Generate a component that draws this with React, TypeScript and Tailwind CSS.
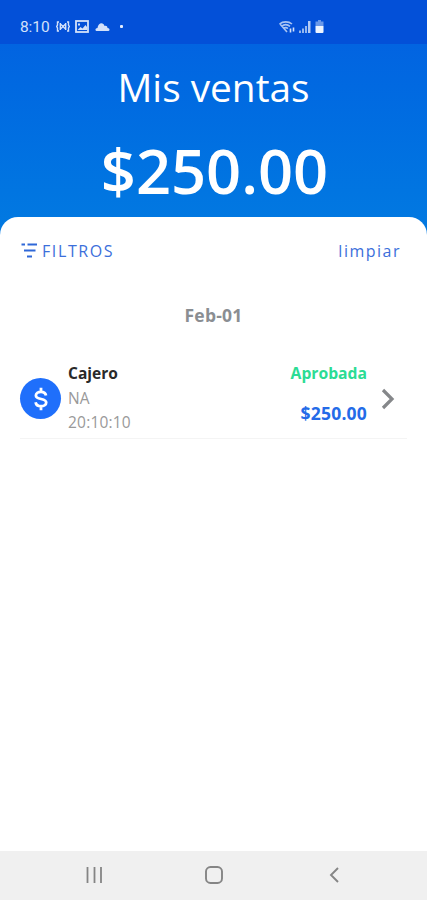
import React from "react";

function StatusBar() {
  return (
    <div className="flex h-11 items-center bg-[#0350d8] pl-5 pt-[9px] text-[#d3e1fa]">
      <span className="w-[36px] font-[Roboto,sans-serif] text-[15.5px] leading-5 tracking-[-0.1px]">8:10</span>
      <svg className="h-[11px] w-[14px]" viewBox="0 0 14 11" fill="none" stroke="currentColor" strokeWidth="1.4">
        <path d="M3 1H1.500v3L.7 5.500l.8 1.500v3H3M11 1h1.500v3l.8 1.500-.8 1.500v3H11M4.300 2v7M9.700 2v7M4.500 3l5 5M9.500 3l-5 5" />
      </svg>
      <svg className="ml-[5px] h-[13px] w-[14px]" viewBox="0 0 14 13" fill="none" stroke="currentColor">
        <rect x="1" y="1" width="12" height="11" strokeWidth="1.800" />
        <path d="M2.500 10l3-3 2 1.500 3-3.500 1.500 2v3z" fill="currentColor" stroke="none" />
        <path d="M3 3.500h2v2H3z" fill="currentColor" stroke="none" />
      </svg>
      <svg className="ml-1.5 h-2.5 w-[15px]" viewBox="0 0 15 10" fill="currentColor">
        <path d="M2 9C-.5 9 .2 6 2.500 6 3 .5 8.500-.2 9.500 4c2-.5 2.800.5 3 2C15 6 15 9 13.500 9z" />
      </svg>
      <span className="ml-[10px] size-[3px] rounded-[1px] bg-[#e4eeff]" />
      <svg className="ml-[156px] h-3 w-4" viewBox="0 0 16 12" fill="none" stroke="currentColor" strokeWidth="1.600">
        <path d="M.5 3C4 .1 9.500.1 13 3M2.500 5.300c2.500-2 6-2 8.500 0M4.500 7.500c1.500-1.200 3-1.200 4.500 0M1 3l7 8" opacity=".8" />
        <path d="M11.500 7.500v4M14.500 6.500v4" />
      </svg>
      <svg className="ml-1 h-3 w-3" viewBox="0 0 12 12" fill="currentColor">
        <path d="M0 9.500h2V12H0zM3 7.500h2V12H3zM6 5h2v7H6z" opacity=".7" />
        <path d="M9 0h2.500v12H9z" opacity=".85" />
      </svg>
      <svg className="ml-1 h-[13px] w-[9px]" viewBox="0 0 9 13" fill="currentColor">
        <path d="M3 0h3v1.500h2.500V6H.5V1.500H3z" opacity=".5" />
        <path d="M.5 6h8v6a1 1 0 0 1-1 1h-6a1 1 0 0 1-1-1z" fill="#eff5ff" />
      </svg>
    </div>
  );
}

function FilterIcon() {
  return (
    <svg className="h-4 w-4" viewBox="0 0 16 16" fill="none" stroke="#2f68d8" strokeWidth="1.900">
      <path d="M.5 1.500H4M6.500 1.500H16M3 7.500h11.500M6 13.500h5" />
    </svg>
  );
}

function SaleRow() {
  return (
    <div className="ml-5 mr-5 flex h-[78px] border-b border-[#f4f4f4]">
      <div className="mt-[17px] flex size-[41px] items-center justify-center rounded-full bg-[#1f6ffb]">
        <svg className="h-6 w-4" viewBox="0 0 16 24" fill="none" stroke="white" strokeWidth="2.800">
          <path d="M8 .8v4M8 19.200v4M13 8.500C12.600 6 11 4.800 8 4.800 5 4.800 2.900 6.200 2.900 8.400c0 4.800 10.300 2.400 10.300 7 0 2.300-2.200 3.800-5.200 3.800-3.300 0-5-1.500-5.400-4" />
        </svg>
      </div>
      <div className="ml-[7px] flex flex-col text-[15.5px] leading-6 text-[#999]">
        <span className="font-bold text-[#292929]">Cajero</span>
        <span className="mt-px">NA</span>
        <span className="tracking-[0.2px]">20:10:10</span>
      </div>
      <div className="ml-auto flex flex-col items-end">
        <span className="text-[15.700px] font-bold leading-6 text-[#2bdc94]">Aprobada</span>
        <span className="mt-4 text-[17.500px] font-bold leading-6 tracking-[0.2px] text-[#246be8]">$250.00</span>
      </div>
      <svg className="ml-[14px] mr-3 mt-[27px] h-[22px] w-[14px]" viewBox="0 0 14 22" fill="none" stroke="#85878a" strokeWidth="3.200">
        <path d="M2 2l9 9-9 9" />
      </svg>
    </div>
  );
}

export default function App() {
  return (
    <div className="flex h-[900px] w-[427px] flex-col overflow-hidden bg-white font-['Open_Sans',sans-serif]">
      <StatusBar />
      <header className="flex h-[203px] shrink-0 flex-col items-center bg-linear-to-b from-[#0264e1] to-[#0279e1] to-90% pt-[13px] text-white">
        <h1 className="text-[38.800px] leading-[60px]">Mis ventas</h1>
        <p className="mt-[13px] pl-[2px] text-[61.400px] font-semibold leading-[80px]">$250.00</p>
      </header>
      <main className="-mt-[30px] flex flex-1 flex-col rounded-t-[18px] bg-white">
        <div className="mt-[22px] flex h-6 items-center justify-between pl-[21px] pr-[26px] text-[16px] leading-6 text-[#3c6fdb]">
          <div className="flex items-center gap-[5px]">
            <FilterIcon />
            <span className="tracking-[1.600px]">FILTROS</span>
          </div>
          <span className="tracking-[1.500px]">limpiar</span>
        </div>
        <h2 className="mb-[34px] mt-10 text-center text-[17.500px] font-bold leading-6 tracking-[0.200px] text-[#8a8e92]">Feb-01</h2>
        <SaleRow />
      </main>
      <nav className="flex h-[49px] shrink-0 items-center bg-[#f0f0f0] pb-[2px] text-[#858585]">
        <svg className="ml-[86px] h-4 w-4" viewBox="0 0 16 16" fill="none" stroke="currentColor" strokeWidth="1.800">
          <path d="M1.500 0v16M8.500 0v16M15 0v16" />
        </svg>
        <svg className="ml-[103px] h-[18px] w-[18px]" viewBox="0 0 18 18" fill="none" stroke="currentColor" strokeWidth="1.900">
          <rect x="1" y="1" width="16" height="16" rx="4.500" />
        </svg>
        <svg className="ml-[106px] h-4 w-[10px]" viewBox="0 0 10 16" fill="none" stroke="currentColor" strokeWidth="1.900">
          <path d="M9 1L2 8l7 7" />
        </svg>
      </nav>
    </div>
  );
}
